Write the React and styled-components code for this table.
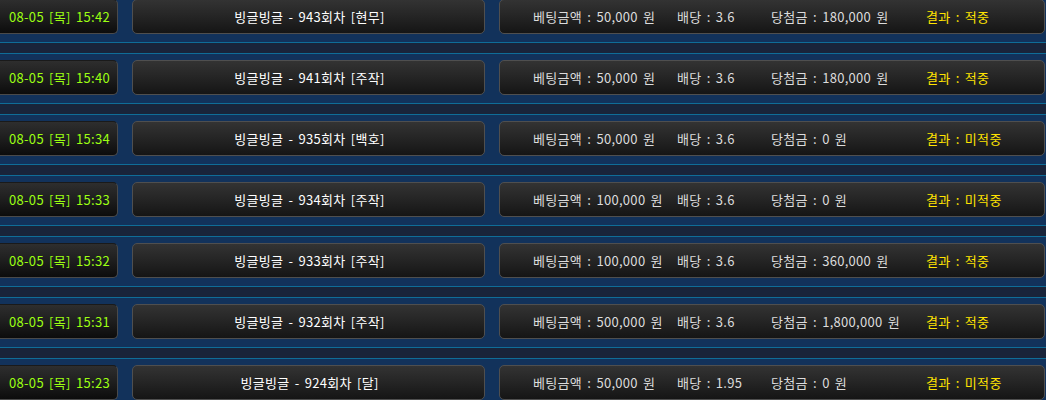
import React from 'react'
import styled, { createGlobalStyle } from 'styled-components'

const GlobalStyle = createGlobalStyle`
html, body {
    margin: 0;
    padding: 0;
    background: #12325b;
    overflow: hidden;
}
`

const List = styled.ul`
list-style: none;
margin: -1px 0 0 0;
padding: 0;
width: 1046px;
height: 401px;
overflow: hidden;
font-family: 'Noto Sans CJK KR', 'Liberation Sans', sans-serif;
font-size: 13px;
letter-spacing: 0.3px;
word-spacing: 2px;
background:
    repeating-linear-gradient(
        to bottom,
        #12325b 0px,
        #12325b 43px,
        #0f6d98 43px,
        #0f6d98 44px,
        #19243a 44px,
        #19243a 54px,
        #0f6d98 54px,
        #0f6d98 55px,
        #12325b 55px,
        #12325b 61px
    );
`

const Row = styled.li`
display: flex;
align-items: stretch;
height: 35px;
margin-bottom: 26px;
`

const Cell = styled.div`
box-sizing: border-box;
display: flex;
align-items: center;
height: 100%;
border-radius: 5px;
border: 1px solid #4f4f4f;
background: linear-gradient(to bottom, #333333 0%, #262626 45%, #151515 100%);
white-space: nowrap;
`

const DateCell = styled(Cell)`
width: 123px;
margin-left: -5px;
justify-content: center;
padding-left: 6px;
color: #9cff12;
border-color: #1a1a1a #4a4a4a #4a4a4a #1a1a1a;
background: linear-gradient(to bottom, #2e2e2e 0%, #1e1e1e 50%, #0c0c0c 100%);
`

const TitleCell = styled(Cell)`
width: 353px;
margin-left: 14px;
justify-content: center;
padding-left: 2px;
color: #ffffff;
`

const InfoCell = styled(Cell)`
width: 546px;
margin-left: 14px;
padding-left: 33px;
color: #dcdcdc;
`

const Col = styled.span`
display: inline-block;
width: ${props => props.w}px;
color: ${props => props.hit ? '#ffe400' : 'inherit'};
`

const rows = [
    { time: '15:42', round: 943, pick: '현무', bet: '50,000', odds: '3.6', win: '180,000', result: '적중' },
    { time: '15:40', round: 941, pick: '주작', bet: '50,000', odds: '3.6', win: '180,000', result: '적중' },
    { time: '15:34', round: 935, pick: '백호', bet: '50,000', odds: '3.6', win: '0', result: '미적중' },
    { time: '15:33', round: 934, pick: '주작', bet: '100,000', odds: '3.6', win: '0', result: '미적중' },
    { time: '15:32', round: 933, pick: '주작', bet: '100,000', odds: '3.6', win: '360,000', result: '적중' },
    { time: '15:31', round: 932, pick: '주작', bet: '500,000', odds: '3.6', win: '1,800,000', result: '적중' },
    { time: '15:23', round: 924, pick: '달', bet: '50,000', odds: '1.95', win: '0', result: '미적중' },
]

const App = () => {
    return (
        <>
            <GlobalStyle />
            <List>
                {rows.map(r => (
                    <Row key={r.round}>
                        <DateCell>08-05 [목] {r.time}</DateCell>
                        <TitleCell>빙글빙글 - {r.round}회차 [{r.pick}]</TitleCell>
                        <InfoCell>
                            <Col w={144}>베팅금액 : {r.bet} 원</Col>
                            <Col w={94}>배당 : {r.odds}</Col>
                            <Col w={155}>당첨금 : {r.win} 원</Col>
                            <Col w={100} hit>결과 : {r.result}</Col>
                        </InfoCell>
                    </Row>
                ))}
            </List>
        </>
    )
}

export default App
